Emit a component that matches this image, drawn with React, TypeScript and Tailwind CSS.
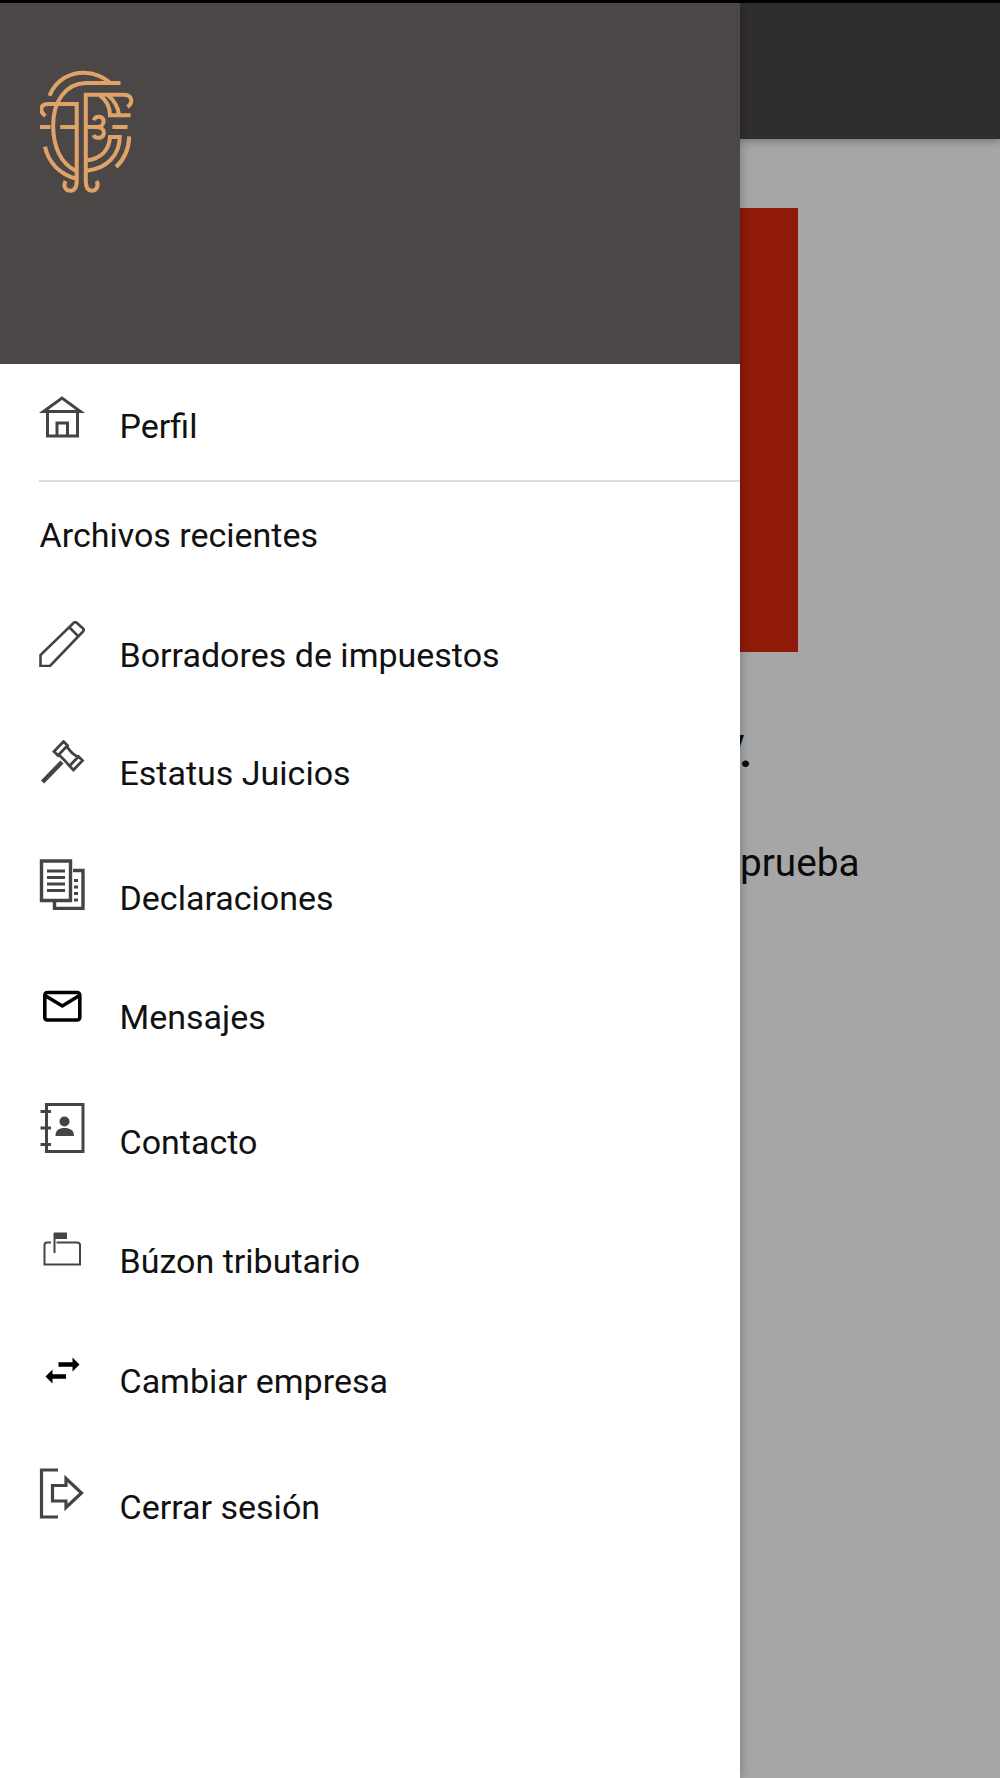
import type { ReactNode } from 'react';

type MenuItem = {
  label: string;
  icon: ReactNode;
};

const Logo = () => (
  <svg width="101" height="130" viewBox="60 50 300 390" preserveAspectRatio="none" fill="none" stroke="#dfa269" strokeWidth="12">
    <path d="M88 136C108 88 150 66 192 67C225 68 248 80 266 95" />
    <path d="M299 98H195C135 100 99 155 99 225C99 290 122 340 166 361" />
    <path d="M76 197C56 182 62 161 84 161H169V392C169 412 161 421 150 421C135 421 128 406 136 392" />
    <path d="M228 392C236 406 228 421 214 421C203 421 196 412 196 392V133H308C334 133 338 156 320 170" />
    <path d="M238 135C255 148 268 170 268 195H329M262 135C280 150 292 168 295 195" />
    <path d="M220 210C224 195 249 195 249 213C249 224 241 230 230 230C243 231 251 238 250 248C248 266 224 266 219 254" />
    <path d="M58 230H91M120 230H169M196 230H242M275 230H320" />
    <path d="M200 330C240 325 265 300 268 260H297C296 315 258 355 200 361" />
    <path d="M325 258C324 295 312 325 286 350" />
    <path d="M75 289C84 335 118 372 168 385" />
  </svg>
);

const HomeIcon = () => (
  <svg width="46" height="46" viewBox="0 0 46 46" fill="none" stroke="#444" strokeWidth="3">
    <path d="M4.5 19.5 23 6 41.5 19.5ZM8.5 19V44H38.5V19M18 43V31H28.5V43" />
  </svg>
);

const PencilIcon = () => (
  <svg width="46" height="46" viewBox="0 0 46 46" fill="none" stroke="#444" strokeWidth="2.6">
    <path d="M1.5 45V34L35 1.5Q36.5 .5 38 2L44 7.5Q45.5 9 44 10.5L11 45ZM30.5 6.5 39.5 15.5" />
  </svg>
);

const GavelIcon = () => (
  <svg width="46" height="45" viewBox="0 0 46 45" fill="none" stroke="#444" strokeWidth="2.8">
    <path d="M24.5 1.5 28.5 5.5 19 15.5 15 11.5ZM39.5 16.5 43.5 20.5 34.5 30 30.5 26ZM28 6.5C31 11.5 34 14.5 39 17M20 15C24 18.5 27 21.5 30 25.5" />
    <path d="M3.5 42 23 22" strokeWidth="4.5" />
  </svg>
);

const DocumentsIcon = () => (
  <svg width="46" height="51" viewBox="0 0 46 51" fill="none" stroke="#444" strokeWidth="3.4">
    <path d="M2.5 2H31.5V41.5H2.5Z" />
    <path d="M34 11.5H44V49.5H15.5V43" />
    <path d="M8 12H26M8 18.5H26M8 25H26M8 31.5H26" strokeWidth="3" />
    <path d="M35 21.5H39M35 28H39M35 34.5H39M35 41H39" strokeWidth="3" />
  </svg>
);

const MailIcon = () => (
  <svg width="46" height="46" viewBox="0 0 46 46" fill="none" stroke="#000" strokeWidth="3.6">
    <rect x="5.8" y="9.5" width="35" height="27.5" rx="2.5" />
    <path d="M6 12.5 23.3 23 40.5 12.5" />
  </svg>
);

const ContactIcon = () => (
  <svg width="46" height="51" viewBox="0 0 46 51" fill="none" stroke="#444" strokeWidth="3">
    <path d="M7.5 1.5H44V48.5H7.5Z" />
    <path d="M1.5 8.5H12M1.5 25H12M1.5 41.5H12" />
    <path d="M16.5 33C16.5 27 20 25 25.5 25S35 27 35 33Z" fill="#444" stroke="none" />
    <circle cx="25.5" cy="18.5" r="5" fill="#444" stroke="none" />
  </svg>
);

const MailboxIcon = () => (
  <svg width="46" height="46" viewBox="0 0 46 46" fill="none" stroke="#444" strokeWidth="2">
    <path d="M12 15.5H8Q5.5 15.5 5.5 18V37.5H41V18Q41 15.5 38 15.5H17.5M15.5 26V6" />
    <path d="M15 5.5H28V12H15Z" fill="#444" stroke="none" />
  </svg>
);

const SwapIcon = () => (
  <svg width="46" height="46" viewBox="0 0 46 46" fill="#000">
    <path d="M19.5 15.3H33.5V10.500L40.5 17.500 33.5 24.500V19.700H19.5Z" />
    <path d="M27 27.300H13.5V22.500L6.5 29.500 13.5 36.500V31.700H27Z" />
  </svg>
);

const LogoutIcon = () => (
  <svg width="46" height="52" viewBox="0 0 46 52" fill="none" stroke="#444" strokeWidth="3.2">
    <path d="M19 3H2.5V50H19" />
    <path d="M13.5 18.5H27V11.5L42.5 26 27 40.5V34H13.5Z" />
  </svg>
);

const items: MenuItem[] = [
  { label: 'Borradores de impuestos', icon: <PencilIcon /> },
  { label: 'Estatus Juicios', icon: <GavelIcon /> },
  { label: 'Declaraciones', icon: <DocumentsIcon /> },
  { label: 'Mensajes', icon: <MailIcon /> },
  { label: 'Contacto', icon: <ContactIcon /> },
  { label: 'Búzon tributario', icon: <MailboxIcon /> },
  { label: 'Cambiar empresa', icon: <SwapIcon /> },
  { label: 'Cerrar sesión', icon: <LogoutIcon /> },
];

const MenuRow = ({ label, icon }: MenuItem) => (
  <li className="flex items-baseline gap-[34.5px] pl-[39px] pt-[36px] pb-[29.6px]">
    {icon}
    <span>{label}</span>
  </li>
);

const Drawer = () => (
  <nav className="relative z-10 flex w-[740px] shrink-0 flex-col bg-white shadow-[0_0_10px_rgba(0,0,0,0.3)]">
    <div className="h-[361px] bg-[#4b4746] pl-[40px] pt-[64px]">
      <Logo />
    </div>
    <ul className="text-[34px] leading-[40px] text-[#111]">
      <li className="flex h-[116px] items-baseline gap-[34.5px] pl-[39px] pt-[27.5px]">
        <HomeIcon />
        <span>Perfil</span>
      </li>
      <li className="ml-[39px] h-[2px] bg-[#dcdcdc]" />
      <li className="h-[102.5px] pl-[39.5px] pt-[33px]">Archivos recientes</li>
      {items.map((item) => (
        <MenuRow key={item.label} label={item.label} icon={item.icon} />
      ))}
    </ul>
  </nav>
);

// Page behind the drawer, already dimmed
const Backdrop = () => (
  <main className="flex flex-1 flex-col bg-[#a6a6a6] text-[#0a0a0a]">
    <div className="h-[136px] bg-[#302e2c] shadow-[0_2px_8px_rgba(0,0,0,0.3)]" />
    <div className="mt-[69px] h-[444px] w-[58px] bg-[#8f1a08]" />
    <div className="mt-[72px] flex h-[56px] w-[12px] justify-end text-[44px] font-bold leading-[56px]">
      <span>V.</span>
    </div>
    <p className="mt-[55px] text-[38.7px] leading-[56px]">prueba</p>
  </main>
);

export default function App() {
  return (
    <div className="flex h-[1778px] w-[1000px] overflow-hidden border-t-[3px] border-black font-[Roboto,sans-serif]">
      <Drawer />
      <Backdrop />
    </div>
  );
}
